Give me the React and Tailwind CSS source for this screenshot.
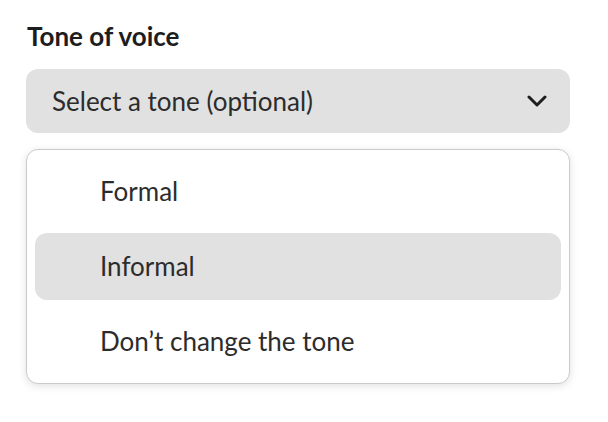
import { useState } from 'react';

const tones = ['Formal', 'Informal', 'Don\u2019t change the tone'];

export default function App() {
  const [active] = useState(1);

  return (
    <div className="w-[608px] h-[422px] bg-white pt-[21px] pl-[26px] pr-[38px] font-['Lato',sans-serif] text-[#222222]">
      <div className="text-[26px] font-bold leading-[30px] pl-[1px] text-[#1d1d1d]">Tone of voice</div>

      {/* Trigger */}
      <button className="mt-[18px] w-full h-[64px] rounded-[12px] bg-[#e1e1e1] flex items-center justify-between pl-[26px] pr-[23px] text-left">
        <span className="text-[26px] leading-none text-[#2c2c2c]">Select a tone (optional)</span>
        <svg width="20" height="12" viewBox="0 0 20 12" fill="none" className="text-[#1e1e1e]">
          <path d="M2 2l8 8 8-8" stroke="currentColor" strokeWidth="3" strokeLinecap="round" strokeLinejoin="round" />
        </svg>
      </button>

      {/* Menu */}
      <div className="mt-[16px] w-full rounded-[12px] border border-[#cacaca] bg-white shadow-[0_2px_8px_rgba(0,0,0,0.12)] p-2 flex flex-col gap-2">
        {tones.map((t, i) => (
          <div
            key={t}
            className={`h-[67px] rounded-[12px] flex items-center pl-[65px] text-[26px] text-[#2c2c2c] ${
              i === active ? 'bg-[#e1e1e1]' : ''
            }`}
          >
            {t}
          </div>
        ))}
      </div>
    </div>
  );
}
